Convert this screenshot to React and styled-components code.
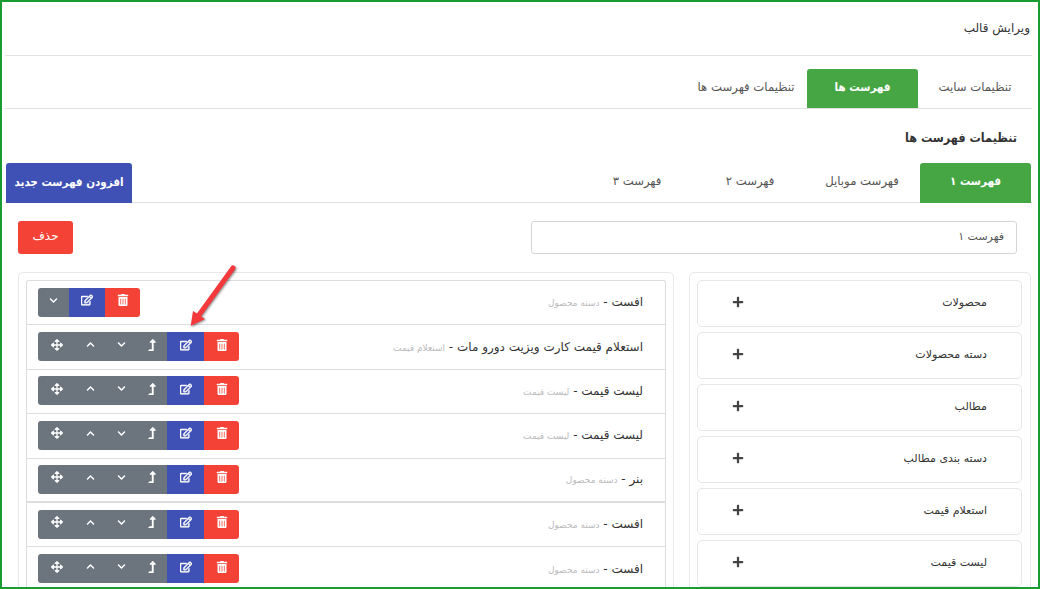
import styled, { createGlobalStyle } from "styled-components";
import {
  FaArrowsAlt,
  FaChevronUp,
  FaChevronDown,
  FaLevelUpAlt,
  FaRegEdit,
  FaTrashAlt,
  FaPlus,
} from "react-icons/fa";

const GlobalStyle = createGlobalStyle`
  html, body {
    margin: 0;
    padding: 0;
    background: #fff;
  }
  * {
    box-sizing: border-box;
  }
`;

const boldFont = `"DejaVu Sans Condensed", "DejaVu Sans", sans-serif`;

const Frame = styled.div`
  position: relative;
  width: 1040px;
  height: 589px;
  overflow: hidden;
  border: 2px solid #1a9c33;
  padding: 0 6px 0 3px;
  direction: rtl;
  background: #fff;
  color: #333;
  font-family: "DejaVu Sans", "Noto Sans", sans-serif;
  font-size: 12px;
`;

const TitleBar = styled.div`
  height: 54px;
  padding: 0 2px 2px 0;
  display: flex;
  align-items: center;
  border-bottom: 1px solid #e2e2e2;
  font-size: 12px;
  color: #333;
`;

const TabRow = styled.div`
  display: flex;
  height: ${(p) => p.$height}px;
  margin-top: ${(p) => p.$top || 0}px;
  padding-right: ${(p) => p.$inset || 0}px;
  border-bottom: 1px solid #e0e0e0;
`;

const Tab = styled.div`
  width: ${(p) => p.$width}px;
  height: ${(p) => p.$height}px;
  display: flex;
  align-items: center;
  justify-content: center;
  padding-bottom: 4px;
  white-space: nowrap;
  font-family: ${(p) => (p.$active ? boldFont : "inherit")};
  font-size: ${(p) => (p.$active ? "11.5px" : "11.7px")};
  font-weight: ${(p) => (p.$active ? 700 : 400)};
  color: ${(p) => (p.$active ? "#fff" : "#555")};
  background: ${(p) => (p.$active ? "#47a644" : "transparent")};
  border-radius: ${(p) => (p.$active ? "3px 3px 0 0" : "0")};
`;

const AddTab = styled.div`
  margin-right: auto;
  margin-left: 1px;
  width: 126px;
  height: 40px;
  display: flex;
  align-items: center;
  justify-content: center;
  padding-bottom: 3px;
  white-space: nowrap;
  font-family: ${boldFont};
  font-size: 11.5px;
  font-weight: 700;
  color: #fff;
  background: #3f51b5;
  border-radius: 3px 3px 0 0;
`;

const Heading = styled.h2`
  margin: 0;
  height: 54px;
  padding: 2px 15px 0 0;
  display: flex;
  align-items: center;
  font-family: ${boldFont};
  font-size: 12.5px;
  font-weight: 700;
  color: #333;
`;

const FormRow = styled.div`
  display: flex;
  justify-content: space-between;
  padding: 18px 15px 0 13px;
`;

const NameInput = styled.div`
  width: 486px;
  height: 33px;
  display: flex;
  align-items: center;
  padding: 0 12px 2px;
  border: 1px solid #d5d5d5;
  border-radius: 3px;
  font-size: 11px;
  color: #555;
`;

const DeleteButton = styled.div`
  width: 55px;
  height: 33px;
  display: flex;
  align-items: center;
  justify-content: center;
  padding-bottom: 3px;
  background: #f44336;
  border-radius: 3px;
  color: #fff;
  font-size: 12px;
`;

const Columns = styled.div`
  display: flex;
  gap: 15px;
  padding: 18px 1px 0 13px;
`;

const SourcePanel = styled.div`
  width: 342px;
  flex: none;
  padding: 7px 8px 0 7px;
  border: 1px solid #e8e8e8;
  border-radius: 5px;
  display: flex;
  flex-direction: column;
  gap: 5.5px;
`;

const SourceItem = styled.div`
  height: 46.5px;
  flex: none;
  display: flex;
  align-items: center;
  justify-content: space-between;
  padding: 0 34px 2px 34px;
  border: 1px solid #e6e6e6;
  border-radius: 5px;
  font-size: 11px;
  font-weight: 500;
  color: #333;
`;

const PlusIcon = styled(FaPlus)`
  font-size: 12px;
  color: #444;
`;

const MenuPanel = styled.div`
  flex: 1;
  padding: 7px 7px 0;
  border: 1px solid #e8e8e8;
  border-radius: 5px;
`;

const MenuList = styled.div`
  border: 1px solid #ddd;
  border-bottom: 0;
  border-radius: 3px 3px 0 0;
`;

const MenuRow = styled.div`
  height: 44.4px;
  display: flex;
  align-items: center;
  justify-content: space-between;
  padding: 0 22px 1px 11px;
  border-bottom: ${(p) => (p.$thick ? "2px" : "1px")} solid #ddd;
`;

const RowTitle = styled.div`
  font-size: 12px;
  color: #333;
  white-space: nowrap;
`;

const RowType = styled.span`
  font-size: 9px;
  color: #bbb;
`;

const ButtonGroup = styled.div`
  display: flex;
  height: 29px;
  direction: ltr;
  border-radius: 3px;
  overflow: hidden;
`;

const ToolButton = styled.div`
  width: ${(p) => p.$width}px;
  display: flex;
  align-items: center;
  justify-content: center;
  padding-bottom: 4px;
  color: #fff;
  font-size: 12px;
  background: ${(p) => p.$bg};
`;

const GrayButton = styled(ToolButton).attrs({ $bg: "#6c757d" })`
  font-size: ${(p) => p.$size || 12}px;
`;

const EditIcon = styled(FaRegEdit)`
  stroke: currentColor;
  stroke-width: 24px;
`;

const ArrowMark = styled.svg`
  position: absolute;
  left: 178px;
  top: 258px;
  filter: drop-shadow(1px 1px 1px rgba(0, 0, 0, 0.45));
`;

const sources = [
  "محصولات",
  "دسته محصولات",
  "مطالب",
  "دسته بندی مطالب",
  "استعلام قیمت",
  "لیست قیمت",
];

const rows = [
  { title: "استعلام قیمت کارت ویزیت دورو مات", type: "استعلام قیمت" },
  { title: "لیست قیمت", type: "لیست قیمت" },
  { title: "لیست قیمت", type: "لیست قیمت" },
  { title: "بنر", type: "دسته محصول", thick: true },
  { title: "افست", type: "دسته محصول" },
  { title: "افست", type: "دسته محصول" },
];

const App = () => {
  return (
    <>
      <GlobalStyle />
      <Frame>
        <TitleBar>ویرایش قالب</TitleBar>
        <TabRow $height={40} $top={13}>
          <Tab $width={114} $height={39}>تنظیمات سایت</Tab>
          <Tab $width={111} $height={39} $active>فهرست ها</Tab>
          <Tab $width={122} $height={39}>تنظیمات فهرست ها</Tab>
        </TabRow>
        <Heading>تنظیمات فهرست ها</Heading>
        <TabRow $height={40} $inset={1}>
          <Tab $width={111} $height={40} $active>فهرست ۱</Tab>
          <Tab $width={116} $height={40}>فهرست موبایل</Tab>
          <Tab $width={108} $height={40}>فهرست ۲</Tab>
          <Tab $width={118} $height={40}>فهرست ۳</Tab>
          <AddTab>افزودن فهرست جدید</AddTab>
        </TabRow>
        <FormRow>
          <NameInput>فهرست ۱</NameInput>
          <DeleteButton>حذف</DeleteButton>
        </FormRow>
        <Columns>
          <SourcePanel>
            {sources.map((s) => (
              <SourceItem key={s}>
                {s}
                <PlusIcon />
              </SourceItem>
            ))}
          </SourcePanel>
          <MenuPanel>
            <MenuList>
              <MenuRow>
                <RowTitle>
                  افست - <RowType>دسته محصول</RowType>
                </RowTitle>
                <ButtonGroup>
                  <GrayButton $width={31} $size={9}><FaChevronDown /></GrayButton>
                  <ToolButton $width={36} $bg="#3f51b5"><EditIcon /></ToolButton>
                  <ToolButton $width={35} $bg="#f44336"><FaTrashAlt /></ToolButton>
                </ButtonGroup>
              </MenuRow>
              {rows.map((r, i) => (
                <MenuRow key={i} $thick={r.thick}>
                  <RowTitle>
                    {r.title} - <RowType>{r.type}</RowType>
                  </RowTitle>
                  <ButtonGroup>
                    <GrayButton $width={37}><FaArrowsAlt /></GrayButton>
                    <GrayButton $width={30} $size={9}><FaChevronUp /></GrayButton>
                    <GrayButton $width={32} $size={9}><FaChevronDown /></GrayButton>
                    <GrayButton $width={30}><FaLevelUpAlt /></GrayButton>
                    <ToolButton $width={37} $bg="#3f51b5"><EditIcon /></ToolButton>
                    <ToolButton $width={35} $bg="#f44336"><FaTrashAlt /></ToolButton>
                  </ButtonGroup>
                </MenuRow>
              ))}
            </MenuList>
          </MenuPanel>
        </Columns>
        <ArrowMark width="70" height="78" viewBox="0 0 70 78">
          <path d="M53 8 L19 55" stroke="#f4393c" strokeWidth="5" strokeLinecap="round" fill="none" />
          <path d="M10.7 66 L13 51 L25 59 Z" fill="#f4393c" />
        </ArrowMark>
      </Frame>
    </>
  );
};

export default App;
